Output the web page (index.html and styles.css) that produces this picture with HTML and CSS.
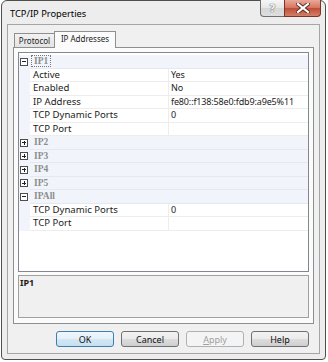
FILE: index.html
```html
<!DOCTYPE html>
<html lang="en">
<head>
  <meta charset="UTF-8">
  <title>TCP/IP Properties</title>
  <link rel="stylesheet" href="styles.css">
</head>
<body>
  <div class="window">
    <!-- Title bar -->
    <div class="titlebar">
      <span class="title">TCP/IP Properties</span>
      <div class="caption-buttons">
        <div class="cap-btn help-btn">?</div>
        <div class="cap-btn close-btn">
          <svg width="14" height="10" viewBox="0 0 14 10">
            <path d="M2 1 L12 9 M12 1 L2 9" stroke="#5a2a22" stroke-width="4" stroke-linecap="square"/>
            <path d="M2 1 L12 9 M12 1 L2 9" stroke="#fff" stroke-width="2.2" stroke-linecap="square"/>
          </svg>
        </div>
      </div>
    </div>

    <div class="client">
      <!-- Tabs -->
      <div class="tabs">
        <div class="tab">Protocol</div>
        <div class="tab active">IP Addresses</div>
      </div>

      <div class="panel">
        <!-- Property grid -->
        <div class="grid">
          <div class="row cat">
            <span class="gutter"><span class="toggle minus"></span></span>
            <span class="cat-name"><span class="focus">IP1</span></span>
          </div>
          <div class="row prop">
            <span class="gutter"></span><span class="name">Active</span><span class="value">Yes</span>
          </div>
          <div class="row prop">
            <span class="gutter"></span><span class="name">Enabled</span><span class="value">No</span>
          </div>
          <div class="row prop">
            <span class="gutter"></span><span class="name">IP Address</span><span class="value">fe80::f138:58e0:fdb9:a9e5%11</span>
          </div>
          <div class="row prop">
            <span class="gutter"></span><span class="name">TCP Dynamic Ports</span><span class="value">0</span>
          </div>
          <div class="row prop">
            <span class="gutter"></span><span class="name">TCP Port</span><span class="value"></span>
          </div>
          <div class="row cat">
            <span class="gutter"><span class="toggle plus"></span></span>
            <span class="cat-name"><span class="label">IP2</span></span>
          </div>
          <div class="row cat">
            <span class="gutter"><span class="toggle plus"></span></span>
            <span class="cat-name"><span class="label">IP3</span></span>
          </div>
          <div class="row cat">
            <span class="gutter"><span class="toggle plus"></span></span>
            <span class="cat-name"><span class="label">IP4</span></span>
          </div>
          <div class="row cat">
            <span class="gutter"><span class="toggle plus"></span></span>
            <span class="cat-name"><span class="label">IP5</span></span>
          </div>
          <div class="row cat">
            <span class="gutter"><span class="toggle minus"></span></span>
            <span class="cat-name"><span class="label">IPAll</span></span>
          </div>
          <div class="row prop">
            <span class="gutter"></span><span class="name">TCP Dynamic Ports</span><span class="value">0</span>
          </div>
          <div class="row prop">
            <span class="gutter"></span><span class="name">TCP Port</span><span class="value"></span>
          </div>
        </div>

        <!-- Description -->
        <div class="description">
          <span class="desc-title">IP1</span>
        </div>
      </div>

      <!-- Dialog buttons -->
      <div class="actions">
        <button class="btn default">OK</button>
        <button class="btn">Cancel</button>
        <button class="btn disabled"><u>A</u>pply</button>
        <button class="btn">Help</button>
      </div>
    </div>
  </div>
</body>
</html>
```

FILE: styles.css
```css
/* Reset */
* {
  margin: 0;
  padding: 0;
  box-sizing: border-box;
}

body {
  background: #fff;
  font-family: 'Noto Sans', 'Open Sans', sans-serif;
  font-size: 9px;
  color: #1c1c1c;
}

/* Window frame */
.window {
  margin-left: 1px;
  width: 325px;
  height: 360px;
  border: 1px solid #4f4f4f;
  border-radius: 6px 6px 4px 4px;
  background: #ededed;
  padding: 0 5px 5px;
  display: flex;
  flex-direction: column;
}

/* Title bar */
.titlebar {
  height: 24px;
  margin: -1px -5px 0;
  padding-left: 8px;
  display: flex;
  align-items: flex-start;
}

.title {
  padding-top: 7px;
  font-size: 9.3px;
  line-height: 14px;
  color: #000;
}

.caption-buttons {
  margin-left: auto;
  margin-right: 4px;
  display: flex;
}

.cap-btn {
  height: 17px;
  display: flex;
  align-items: center;
  justify-content: center;
  border: 1px solid #6f6f6f;
  border-top: none;
}

.help-btn {
  width: 24px;
  border-right: none;
  border-radius: 0 0 0 4px;
  background: linear-gradient(#f6f6f6, #e6e6e6 50%, #d6d6d6 50%, #dedede);
  color: #f4f4f4;
  font-family: 'DejaVu Sans', sans-serif;
  font-size: 11px;
  font-weight: bold;
  text-shadow: 0 0 1px #555, 0 0 1px #555;
}

.close-btn {
  width: 37px;
  border-color: #7a3328;
  border-radius: 0 0 4px 0;
  background: linear-gradient(#e9a99a, #d4735f 50%, #c14a33 50%, #d1806a);
}

/* Client area */
.client {
  flex: 1;
  border: 1px solid #a5a5a5;
  background: #f0f0f0;
  padding: 6px 5px 6px;
  display: flex;
  flex-direction: column;
}

/* Tabs */
.tabs {
  height: 16px;
  display: flex;
  align-items: flex-end;
  padding-left: 1px;
  position: relative;
  z-index: 1;
}

.tab {
  width: 41px;
  height: 14px;
  border: 1px solid #8e8f8f;
  border-bottom: none;
  background: linear-gradient(#f2f2f2, #e3e3e3);
  text-align: center;
  line-height: 13px;
  font-size: 8px;
}

.tab.active {
  width: 62px;
  height: 17px;
  margin-left: -1px;
  margin-bottom: -1px;
  background: #fbfbfb;
  line-height: 14px;
}

.panel {
  height: 277px;
  border: 1px solid #8e8f8f;
  background: #fbfbfb;
  padding: 4px 4px 5px;
  display: flex;
  flex-direction: column;
  gap: 3px;
}

/* Property grid */
.grid {
  height: 220px;
  border: 1px solid #828790;
  background: #fff;
  padding-top: 2px;
}

.row {
  height: 13.5px;
  display: grid;
  grid-template-columns: 11px 139px 1fr;
  line-height: 12.5px;
}

.gutter {
  background: #f1f5fb;
  display: flex;
  align-items: center;
  padding-left: 1px;
}

.name,
.value {
  border-bottom: 1px solid #ededed;
  white-space: nowrap;
  overflow: hidden;
}

.name {
  padding-left: 3px;
  border-right: 1px solid #ededed;
  font-size: 9.6px;
}

.value {
  padding-left: 2px;
  letter-spacing: -0.15px;
}

.cat {
  background: #f1f5fb;
}

.cat .cat-name {
  grid-column: span 2;
  border-bottom: 1px solid #e4e9f0;
  padding-left: 1px;
}

.cat-name span {
  font-family: 'Liberation Serif', serif;
  font-weight: bold;
  font-size: 9.5px;
  color: #8d8d8d;
  padding: 0 2px;
  border: 1px solid transparent;
}

.cat-name .focus {
  border: 1px dotted #777;
}

.toggle {
  width: 8px;
  height: 8px;
  border: 1px solid #4d4d4d;
  background: #fff;
  position: relative;
}

.toggle::before {
  content: '';
  position: absolute;
  left: 1px;
  right: 1px;
  top: 2.5px;
  height: 1px;
  background: #222;
}

.toggle.plus::after {
  content: '';
  position: absolute;
  top: 1px;
  bottom: 1px;
  left: 2.5px;
  width: 1px;
  background: #222;
}

/* Description box */
.description {
  flex: 1;
  border: 1px solid #a0a0a0;
  background: #f0f0f0;
  padding: 1px 1px 0;
  line-height: 12px;
}

.desc-title {
  font-weight: bold;
}

/* Dialog buttons */
.actions {
  margin-top: 7px;
  display: flex;
  justify-content: flex-end;
  gap: 7px;
  padding-right: 5px;
}

.btn {
  width: 58px;
  height: 16px;
  border: 1px solid #707070;
  border-radius: 3px;
  background: linear-gradient(#f2f2f2, #ebebeb 50%, #dddddd 50%, #cfcfcf);
  font-family: 'Noto Sans', sans-serif;
  font-size: 9px;
  color: #111;
}

.btn u {
  text-decoration: underline;
}

.btn.default {
  border-color: #3c7fb1;
  background: linear-gradient(#f0f7fc, #e3f0f9 50%, #d3e7f4 50%, #c6dfef);
}

.btn.disabled {
  border-color: #adb2b5;
  background: #f4f4f4;
  color: #a0a0a0;
}
```
